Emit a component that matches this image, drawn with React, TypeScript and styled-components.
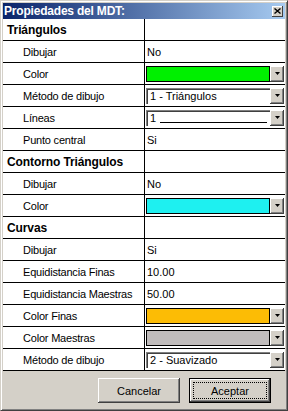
import React from 'react';
import { createGlobalStyle, styled } from 'styled-components';

const GlobalStyle = createGlobalStyle`
  html, body {
    margin: 0;
    padding: 0;
    background: #d4d0c8;
  }
`;

type Item =
  | { kind: 'header'; label: string }
  | { kind: 'text'; label: string; value: string }
  | { kind: 'color'; label: string; color: string }
  | { kind: 'select'; label: string; value: string }
  | { kind: 'line'; label: string; value: string };

const items: Item[] = [
  { kind: 'header', label: 'Triángulos' },
  { kind: 'text', label: 'Dibujar', value: 'No' },
  { kind: 'color', label: 'Color', color: '#00f000' },
  { kind: 'select', label: 'Método de dibujo', value: '1 - Triángulos' },
  { kind: 'line', label: 'Líneas', value: '1' },
  { kind: 'text', label: 'Punto central', value: 'Si' },
  { kind: 'header', label: 'Contorno Triángulos' },
  { kind: 'text', label: 'Dibujar', value: 'No' },
  { kind: 'color', label: 'Color', color: '#1ef0f0' },
  { kind: 'header', label: 'Curvas' },
  { kind: 'text', label: 'Dibujar', value: 'Si' },
  { kind: 'text', label: 'Equidistancia Finas', value: '10.00' },
  { kind: 'text', label: 'Equidistancia Maestras', value: '50.00' },
  { kind: 'color', label: 'Color Finas', color: '#fcbc05' },
  { kind: 'color', label: 'Color Maestras', color: '#c0bcbc' },
  { kind: 'select', label: 'Método de dibujo', value: '2 - Suavizado' },
];

const ArrowIcon = () => (
  <svg width="5" height="3" viewBox="0 0 5 3">
    <polygon points="0,0 5,0 2.5,3" fill="#000" />
  </svg>
);

const CloseIcon = () => (
  <svg width="7" height="6" viewBox="0 0 7 6">
    <path d="M0.5 0.5 L6.5 5.5 M6.5 0.5 L0.5 5.5" stroke="#000" strokeWidth="1.4" />
  </svg>
);

const App = () => {
  const renderValue = (item: Item) => {
    switch (item.kind) {
      case 'text':
        return <ValueText>{item.value}</ValueText>;
      case 'color':
        return (
          <Combo>
            <Swatch $color={item.color} />
            <ArrowButton>
              <ArrowIcon />
            </ArrowButton>
          </Combo>
        );
      case 'select':
        return (
          <Combo>
            <Field>{item.value}</Field>
            <ArrowButton>
              <ArrowIcon />
            </ArrowButton>
          </Combo>
        );
      case 'line':
        return (
          <Combo>
            <Field>
              {item.value}
              <LineSample />
            </Field>
            <ArrowButton>
              <ArrowIcon />
            </ArrowButton>
          </Combo>
        );
      default:
        return null;
    }
  };

  return (
    <>
      <GlobalStyle />
      <Window>
        <TitleBar>
          <Title>Propiedades del MDT:</Title>
          <CloseButton>
            <CloseIcon />
          </CloseButton>
        </TitleBar>
        <Grid>
          {items.map((item, i) => (
            <Row key={i}>
              <LabelCell $header={item.kind === 'header'}>{item.label}</LabelCell>
              <ValueCell>{renderValue(item)}</ValueCell>
            </Row>
          ))}
        </Grid>
        <Footer>
          <Button>Cancelar</Button>
          <Button $default>
            <FocusRing>Aceptar</FocusRing>
          </Button>
        </Footer>
      </Window>
    </>
  );
};

export default App;

const Window = styled.div`
  width: 288px;
  height: 411px;
  box-sizing: border-box;
  display: flex;
  flex-direction: column;
  padding: 2px;
  background: #d4d0c8;
  border: 1px solid;
  border-color: #d4d0c8 #404040 #404040 #d4d0c8;
  box-shadow: inset 1px 1px #ffffff, inset -1px -1px #808080;
  font-family: 'Liberation Sans', Arial, sans-serif;
`;

const TitleBar = styled.div`
  height: 16px;
  display: flex;
  align-items: center;
  justify-content: space-between;
  padding: 0 2px 0 1px;
  background: linear-gradient(to right, #0a246a, #a6caf0);
`;

const Title = styled.div`
  color: #fff;
  font-size: 12px;
  font-weight: 700;
  letter-spacing: -0.2px;
  line-height: 16px;
`;

const CloseButton = styled.div`
  width: 11px;
  height: 11px;
  box-sizing: border-box;
  display: flex;
  align-items: center;
  justify-content: center;
  background: #d4d0c8;
  box-shadow: inset -1px -1px #404040, inset 1px 1px #ffffff;
`;

const Grid = styled.div`
  display: flex;
  flex-direction: column;
  background: #fff;
`;

const Row = styled.div`
  height: 22px;
  box-sizing: border-box;
  display: grid;
  grid-template-columns: 142px 1fr;
  border-bottom: 1px solid #000;
`;

const LabelCell = styled.div<{ $header?: boolean }>`
  display: flex;
  align-items: center;
  border-right: 1px solid #000;
  padding-left: ${(p) => (p.$header ? '4px' : '20px')};
  font-size: ${(p) => (p.$header ? '12px' : '11px')};
  font-weight: ${(p) => (p.$header ? 700 : 400)};
  letter-spacing: ${(p) => (p.$header ? '-0.1px' : '-0.2px')};
  color: #000;
  white-space: nowrap;
`;

const ValueCell = styled.div`
  display: flex;
  align-items: center;
  padding: 0 1px 0 1px;
`;

const ValueText = styled.span`
  padding-left: 1px;
  font-size: 11px;
  color: #000;
`;

const Combo = styled.div`
  flex: 1;
  height: 16px;
  display: flex;
  align-items: stretch;
`;

const Swatch = styled.div<{ $color: string }>`
  flex: 1;
  box-sizing: border-box;
  border: 1px solid #000;
  background: ${(p) => p.$color};
`;

const Field = styled.div`
  flex: 1;
  box-sizing: border-box;
  display: flex;
  align-items: flex-end;
  padding: 0 3px 2px 4px;
  background: #fff;
  box-shadow: inset 1px 1px #808080, inset 2px 2px #404040;
  font-size: 11px;
  line-height: 12px;
  color: #000;
`;

const LineSample = styled.div`
  flex: 1;
  margin: 0 0 1px 4px;
  border-bottom: 1px solid #000;
`;

const ArrowButton = styled.div`
  width: 14px;
  box-sizing: border-box;
  display: flex;
  align-items: center;
  justify-content: center;
  background: #d4d0c8;
  box-shadow: inset -1px -1px #404040, inset 1px 1px #ffffff, inset -2px -2px #808080;
`;

const Footer = styled.div`
  flex: 1;
  display: flex;
  justify-content: flex-end;
  align-items: flex-start;
  gap: 9px;
  padding: 7px 14px 0 0;
`;

const Button = styled.div<{ $default?: boolean }>`
  width: 82px;
  height: 25px;
  box-sizing: border-box;
  display: flex;
  align-items: center;
  justify-content: center;
  padding: ${(p) => (p.$default ? '3px' : '0')};
  background: #d4d0c8;
  border: ${(p) => (p.$default ? '1px solid #000' : 'none')};
  box-shadow: inset -1px -1px #404040, inset 1px 1px #ffffff, inset -2px -2px #808080,
    inset 2px 2px #d4d0c8;
  font-size: 11px;
  color: #000;
`;

const FocusRing = styled.div`
  flex: 1;
  align-self: stretch;
  display: flex;
  align-items: center;
  justify-content: center;
  border: 1px dotted #000;
`;
